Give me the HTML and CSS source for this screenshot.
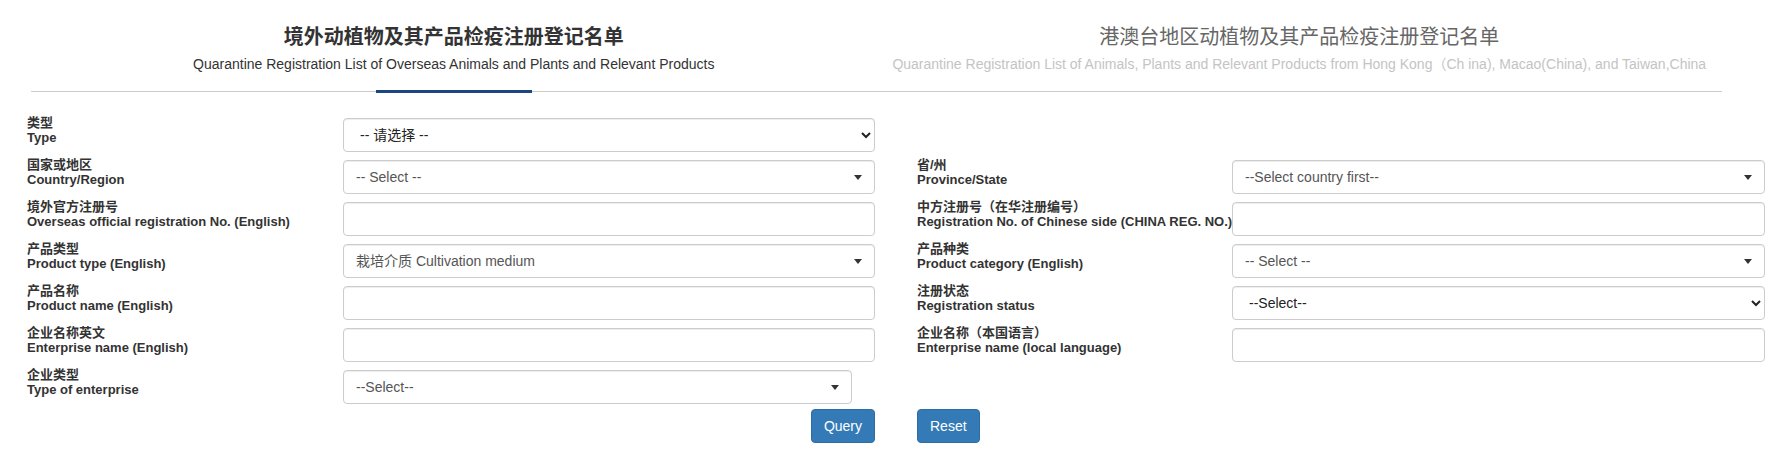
FILE: index.html
```html
<!DOCTYPE html>
<html lang="zh-CN">
<head>
    <meta charset="UTF-8">
    <meta name="viewport" content="width=device-width, initial-scale=1.0">
    <title>境外动植物及其产品检疫注册登记名单</title>
    <link rel="stylesheet" href="styles.css">
</head>
<body>

    <!-- Tabs -->
    <div class="tabs">
        <div class="tab active">
            <div class="tab-title">境外动植物及其产品检疫注册登记名单</div>
            <div class="tab-sub">Quarantine Registration List of Overseas Animals and Plants and Relevant Products</div>
        </div>
        <div class="tab">
            <div class="tab-title">港澳台地区动植物及其产品检疫注册登记名单</div>
            <div class="tab-sub">Quarantine Registration List of Animals, Plants and Relevant Products from Hong Kong（Ch ina), Macao(China), and Taiwan,China</div>
        </div>
    </div>

    <!-- Query form -->
    <form class="query-form">
        <div class="form-row">
            <div class="field">
                <label class="field-label">类型<br>Type</label>
                <select class="form-control native">
                    <option>-- 请选择 --</option>
                </select>
            </div>
            <div class="field right"></div>
        </div>

        <div class="form-row">
            <div class="field">
                <label class="field-label">国家或地区<br>Country/Region</label>
                <div class="form-control select2"><span>-- Select --</span><b class="caret"></b></div>
            </div>
            <div class="field right">
                <label class="field-label">省/州<br>Province/State</label>
                <div class="form-control select2"><span>--Select country first--</span><b class="caret"></b></div>
            </div>
        </div>

        <div class="form-row">
            <div class="field">
                <label class="field-label">境外官方注册号<br>Overseas official registration No. (English)</label>
                <input class="form-control" type="text">
            </div>
            <div class="field right">
                <label class="field-label">中方注册号（在华注册编号）<br>Registration No. of Chinese side (CHINA REG. NO.)</label>
                <input class="form-control" type="text">
            </div>
        </div>

        <div class="form-row">
            <div class="field">
                <label class="field-label">产品类型<br>Product type (English)</label>
                <div class="form-control select2"><span>栽培介质 Cultivation medium</span><b class="caret"></b></div>
            </div>
            <div class="field right">
                <label class="field-label">产品种类<br>Product category (English)</label>
                <div class="form-control select2"><span>-- Select --</span><b class="caret"></b></div>
            </div>
        </div>

        <div class="form-row">
            <div class="field">
                <label class="field-label">产品名称<br>Product name (English)</label>
                <input class="form-control" type="text">
            </div>
            <div class="field right">
                <label class="field-label">注册状态<br>Registration status</label>
                <select class="form-control native">
                    <option>--Select--</option>
                </select>
            </div>
        </div>

        <div class="form-row">
            <div class="field">
                <label class="field-label">企业名称英文<br>Enterprise name (English)</label>
                <input class="form-control" type="text">
            </div>
            <div class="field right">
                <label class="field-label">企业名称（本国语言）<br>Enterprise name (local language)</label>
                <input class="form-control" type="text">
            </div>
        </div>

        <div class="form-row">
            <div class="field">
                <label class="field-label">企业类型<br>Type of enterprise</label>
                <div class="form-control select2 short"><span>--Select--</span><b class="caret"></b></div>
            </div>
            <div class="field right"></div>
        </div>

        <!-- Buttons -->
        <div class="form-row buttons">
            <div class="field btn-left">
                <button type="button" class="btn">Query</button>
            </div>
            <div class="field right">
                <button type="reset" class="btn">Reset</button>
            </div>
        </div>
    </form>

</body>
</html>
```

FILE: styles.css
```css
/* General Styles */
body {
    margin: 0;
    font-family: "Liberation Sans", Arial, "Noto Sans CJK SC", sans-serif;
    color: #333;
    background: #fff;
}

/* Tabs */
.tabs {
    display: flex;
    width: 1691px;
    margin-left: 31px;
    border-bottom: 1px solid #ccc;
}

.tab {
    flex: 1;
    position: relative;
    text-align: center;
    padding: 23px 0 17px;
    white-space: nowrap;
}

.tab-title {
    font-size: 20px;
    line-height: 28px;
    color: #666;
}

.tab-sub {
    margin-top: 3px;
    font-size: 14px;
    line-height: 20px;
    color: #c4c4c4;
}

.tab.active .tab-title {
    font-weight: bold;
    color: #333;
}

.tab.active .tab-sub {
    color: #333;
}

/* Active underline */
.tab.active::after {
    content: "";
    position: absolute;
    left: 50%;
    bottom: -2px;
    width: 156px;
    height: 3px;
    margin-left: -78px;
    background: #1c4680;
}

/* Form */
.query-form {
    display: flex;
    flex-direction: column;
    gap: 5px;
    padding: 23px 0 0 27px;
}

.form-row {
    display: flex;
    gap: 42px;
}

.field {
    display: flex;
    align-items: flex-start;
    width: 848px;
}

.field-label {
    width: 316px;
    flex-shrink: 0;
    font-size: 13px;
    line-height: 15px;
    font-weight: bold;
    white-space: nowrap;
}

.field.right .field-label {
    width: 315px;
}

.form-control {
    box-sizing: border-box;
    width: 532px;
    height: 34px;
    margin-top: 3px;
    padding: 6px 12px;
    font-family: inherit;
    font-size: 14px;
    line-height: 20px;
    color: #555;
    background: #fff;
    border: 1px solid #ccc;
    border-radius: 4px;
    box-shadow: inset 0 1px 1px rgba(0, 0, 0, 0.075);
}

.form-control.native {
    color: #222;
}

.field.right .form-control {
    width: 533px;
}

/* Select2 look-alike */
.select2 {
    display: flex;
    align-items: center;
    padding-right: 12px;
}

.select2.short {
    width: 509px;
}

.caret {
    margin-left: auto;
    width: 0;
    height: 0;
    border-style: solid;
    border-width: 5px 4px 0 4px;
    border-color: #333 transparent transparent transparent;
}

/* Buttons */
.buttons .field {
    align-items: center;
}

.btn-left {
    justify-content: flex-end;
}

.btn {
    height: 34px;
    padding: 6px 12px;
    font-family: inherit;
    font-size: 14px;
    line-height: 20px;
    color: #fff;
    background: #337ab7;
    border: 1px solid #2e6da4;
    border-radius: 4px;
    cursor: pointer;
}
```
